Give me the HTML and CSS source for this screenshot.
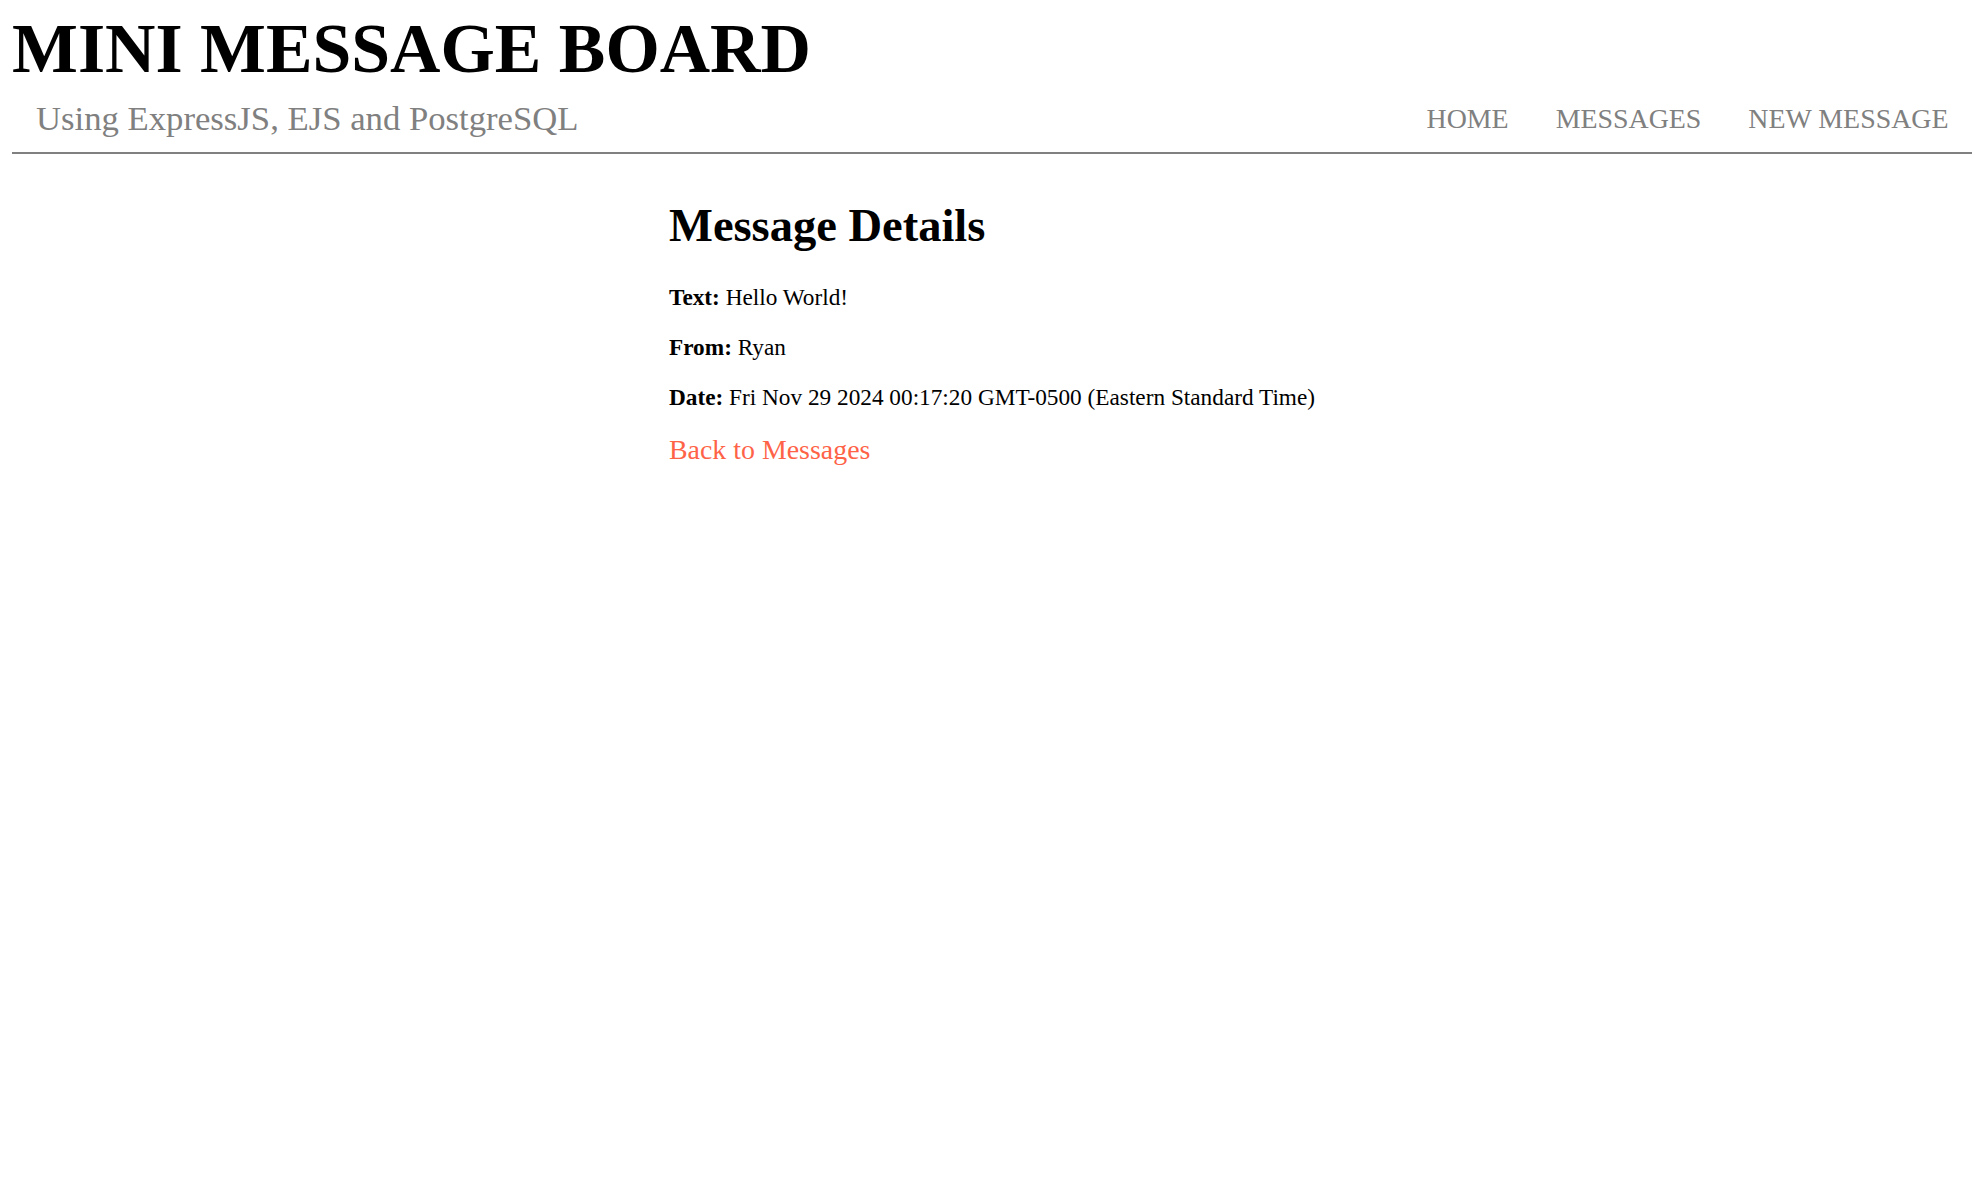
FILE: index.html
```html
<!DOCTYPE html>
<html lang="en">
<head>
<meta charset="utf-8">
<title>Mini Message Board</title>
<link rel="stylesheet" href="styles.css">
</head>
<body>
<header class="site-header">
  <h1 class="site-title">MINI MESSAGE BOARD</h1>
  <div class="header-bar">
    <p class="subtitle">Using ExpressJS, EJS and PostgreSQL</p>
    <nav class="nav">
      <a class="nav-link" href="#">HOME</a>
      <a class="nav-link" href="#">MESSAGES</a>
      <a class="nav-link" href="#">NEW MESSAGE</a>
    </nav>
  </div>
</header>
<main class="content">
  <h1 class="page-title">Message Details</h1>
  <p class="detail"><strong>Text:</strong> Hello World!</p>
  <p class="detail"><strong>From:</strong> Ryan</p>
  <p class="detail"><strong>Date:</strong> Fri Nov 29 2024 00:17:20 GMT-0500 (Eastern Standard Time)</p>
  <a class="back-link" href="#">Back to Messages</a>
</main>
</body>
</html>
```
FILE: styles.css
```css
html, body {
  margin: 0;
  padding: 0;
  background: #ffffff;
}

body {
  font-family: "Liberation Serif", "Times New Roman", serif;
  font-size: 23.27px;
  color: #000000;
  padding: 0 8px 0 12px;
}

.site-header {
  padding-top: 8.5px;
}

.site-title {
  margin: 0;
  font-size: 69.8px;
  font-weight: bold;
  line-height: normal;
}

.header-bar {
  display: flex;
  align-items: center;
  justify-content: space-between;
  margin-top: 10.5px;
  padding-bottom: 12.5px;
  border-bottom: 2px solid #808080;
}

.subtitle {
  margin: 0;
  padding-left: 24px;
  font-size: 34.7px;
  color: #808080;
  line-height: normal;
}

.nav {
  display: flex;
}

.nav-link {
  padding: 0 23.5px;
  font-size: 27.9px;
  color: #808080;
  text-decoration: none;
  line-height: normal;
}

.content {
  width: 646px;
  margin: 0 auto;
  padding-top: 14px;
}

.page-title {
  font-size: 46.5px;
  margin: 31px 0 32px;
  line-height: normal;
}

.detail {
  margin: 23.27px 0;
  white-space: nowrap;
}

.back-link {
  display: block;
  margin-top: 23.27px;
  font-size: 27.9px;
  color: #ff6347;
  text-decoration: none;
  white-space: nowrap;
}
```
